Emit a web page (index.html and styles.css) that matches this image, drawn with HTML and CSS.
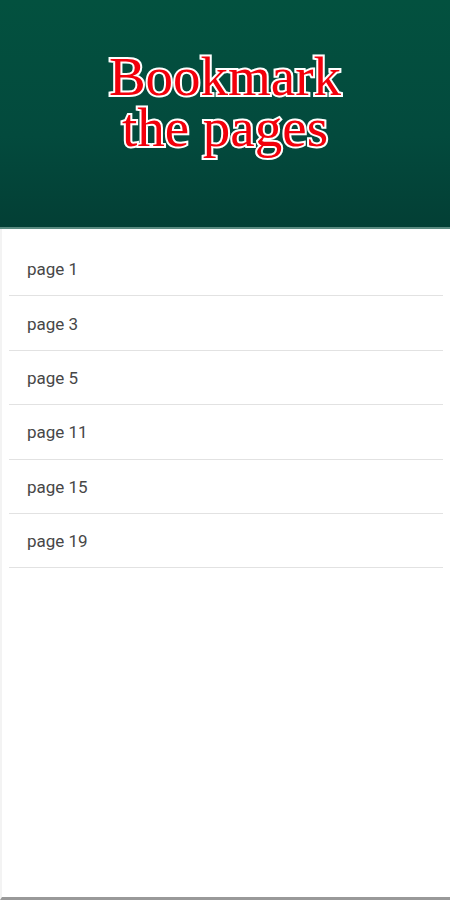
FILE: index.html
```html
<!DOCTYPE html>
<html lang="en">
<head>
    <meta charset="UTF-8">
    <meta name="viewport" content="width=device-width, initial-scale=1.0">
    <title>Bookmark the pages</title>
    <link rel="stylesheet" href="styles.css">
</head>
<body>
    <div class="screen">
        <header class="banner">
            <h1 class="banner-title">
                <span class="banner-line">Bookmark</span>
                <span class="banner-line">the pages</span>
            </h1>
        </header>

        <ul class="bookmark-list">
            <li class="bookmark-item">page 1</li>
            <li class="bookmark-item">page 3</li>
            <li class="bookmark-item">page 5</li>
            <li class="bookmark-item">page 11</li>
            <li class="bookmark-item">page 15</li>
            <li class="bookmark-item">page 19</li>
        </ul>
    </div>
</body>
</html>
```

FILE: styles.css
```css
* {
    box-sizing: border-box;
}

body {
    margin: 0;
    background: #fff;
    font-family: Roboto, "Noto Sans", sans-serif;
}

.screen {
    height: 900px;
    display: flex;
    flex-direction: column;
    border-left: 2px solid #f3f3f3;
    border-bottom: 3px solid #999;
}

.banner {
    height: 229px;
    margin-left: -2px;
    background: linear-gradient(to bottom, #03513f 0%, #034a3d 60%, #033f35 100%);
    border-bottom: 2px solid #5a8a80;
    display: flex;
    justify-content: center;
    padding-top: 51px;
}

.banner-title {
    margin: 0;
    font-family: "Liberation Serif", "Times New Roman", serif;
    font-weight: normal;
    font-size: 55px;
    text-align: center;
    color: #f2000b;
    -webkit-text-stroke: 4px #fff;
    paint-order: stroke fill;
}

.banner-line {
    display: block;
    height: 51px;
    line-height: 51px;
}

.bookmark-list {
    list-style: none;
    margin: 0;
    padding: 13px 7px 0 7px;
}

.bookmark-item {
    height: 54.4px;
    display: flex;
    align-items: center;
    padding-left: 18px;
    padding-top: 1px;
    border-bottom: 1px solid #e2e2e2;
    font-size: 17px;
    color: #474747;
}
```
